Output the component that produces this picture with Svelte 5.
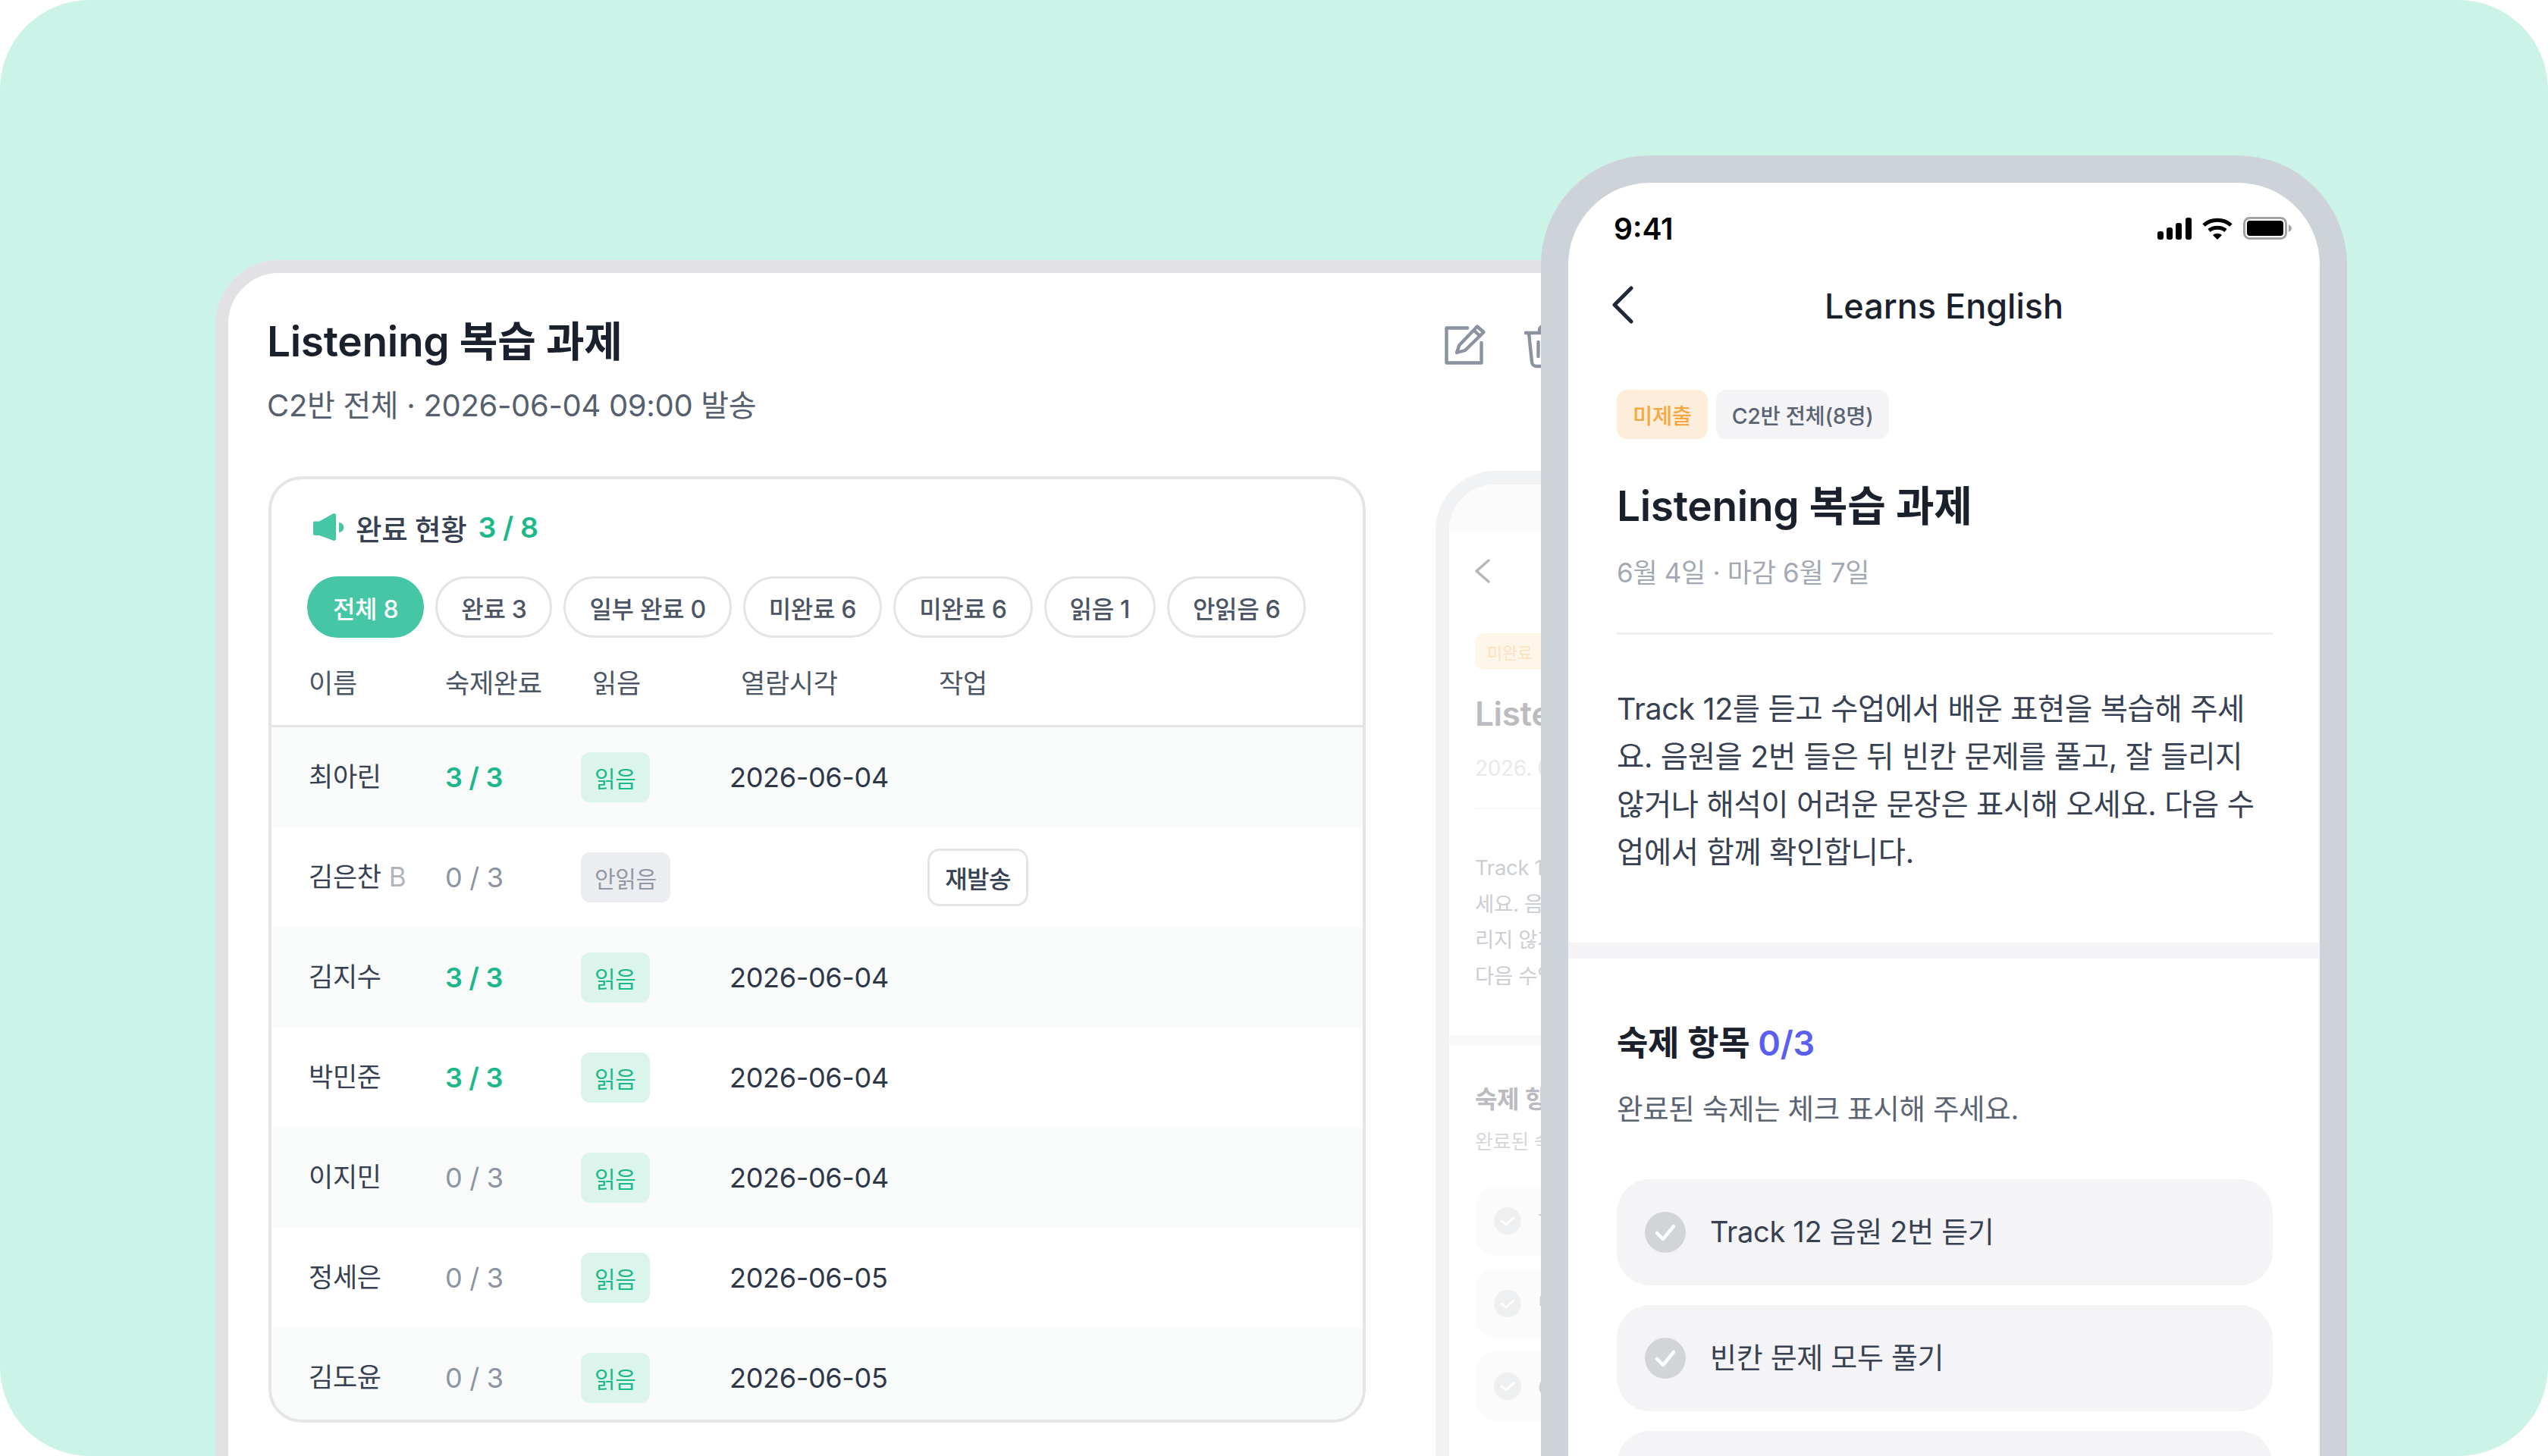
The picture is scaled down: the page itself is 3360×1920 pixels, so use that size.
<script lang="ts">
	const filters = [
		{ label: '전체 8', active: true },
		{ label: '완료 3' },
		{ label: '일부 완료 0' },
		{ label: '미완료 6' },
		{ label: '미완료 6' },
		{ label: '읽음 1' },
		{ label: '안읽음 6' }
	];

	const students = [
		{ name: '최아린', score: '3 / 3', done: true, read: true, date: '2026-06-04' },
		{ name: '김은찬', suffix: 'B', score: '0 / 3', read: false, date: '' },
		{ name: '김지수', score: '3 / 3', done: true, read: true, date: '2026-06-04' },
		{ name: '박민준', score: '3 / 3', done: true, read: true, date: '2026-06-04' },
		{ name: '이지민', score: '0 / 3', read: true, date: '2026-06-04' },
		{ name: '정세은', score: '0 / 3', read: true, date: '2026-06-05' },
		{ name: '김도윤', score: '0 / 3', read: true, date: '2026-06-05' }
	];

	const tasks = ['Track 12 음원 2번 듣기', '빈칸 문제 모두 풀기', 'Quiz 3 풀기'];
</script>

<main class="stage">
	<section class="tablet">
		<header class="tablet-head">
			<div>
				<h1>Listening 복습 과제</h1>
				<p>C2반 전체 · 2026-06-04 09:00 발송</p>
			</div>
			<div class="head-icons">
				<svg width="56" height="56" viewBox="0 0 56 56" fill="none" stroke="#8a939f" stroke-width="4.4" stroke-linecap="round" stroke-linejoin="round">
					<path d="M30 5.500H2.500v46h46V25" />
					<path d="M16 38l3.500-10L43 3.500l8.500 7.500L27 35z" />
					<path d="M38.500 8.500l8 7.500" />
				</svg>
				<svg width="60" height="60" viewBox="0 0 60 60" fill="none" stroke="#8a939f" stroke-width="4.4" stroke-linecap="round" stroke-linejoin="round">
					<path d="M2 12h56M20 12V8a5 5 0 0 1 5-5h10a5 5 0 0 1 5 5v4" />
					<path d="M6 12l4 38a6 6 0 0 0 6 6h28a6 6 0 0 0 6-6l4-38" />
					<path d="M18.500 24v19M30 24v19M41.500 24v19" />
				</svg>
			</div>
		</header>

		<section class="card">
			<div class="card-title">
				<svg width="41" height="38" viewBox="0 0 41 38">
					<path fill="#45c6a4" d="M2 11.500h6L26 1.500a2.500 2.500 0 0 1 4 2v31a2.500 2.500 0 0 1-4 2L8 30h-6a2 2 0 0 1-2-2V13.500a2 2 0 0 1 2-2z" />
					<path fill="#45c6a4" d="M34 13a6.500 6.500 0 0 1 0 13z" />
				</svg>
				<span>완료 현황</span>
				<b>3 / 8</b>
			</div>

			<div class="chips">
				{#each filters as f}
					<span class="chip" class:active={f.active}>{f.label}</span>
				{/each}
			</div>

			<div class="row head">
				<span>이름</span>
				<span>숙제완료</span>
				<span class="shift">읽음</span>
				<span class="shift">열람시각</span>
				<span class="shift">작업</span>
			</div>

			{#each students as s, i}
				<div class="row" class:odd={i % 2 === 0}>
					<span class="name">{s.name}{#if s.suffix}<em>{s.suffix}</em>{/if}</span>
					<span class="score" class:done={s.done}>{s.score}</span>
					<span><i class="badge" class:unread={!s.read}>{s.read ? '읽음' : '안읽음'}</i></span>
					<span class="date">{s.date}</span>
					<span>{#if !s.read}<button class="resend">재발송</button>{/if}</span>
				</div>
			{/each}
		</section>

		<aside class="ghost">
			<div class="ghost-status"></div>
			<div class="ghost-body">
				<svg width="20" height="32" viewBox="0 0 20 32" fill="none" stroke="#b5b7bb" stroke-width="3.5" stroke-linecap="round" stroke-linejoin="round">
					<path d="M18 2L2 16l16 14" />
				</svg>
				<span class="ghost-tag">미완료</span>
				<h2>Listening 복습 과제</h2>
				<p class="ghost-date">2026. 06. 04</p>
				<div class="ghost-line"></div>
				<p class="ghost-text">Track 12를 듣고 수업에서 배운<br />세요. 음원을 2번 들은 뒤<br />리지 않거나 해석이 어려운<br />다음 수업에서 함께</p>
			</div>
			<div class="ghost-band"></div>
			<div class="ghost-body lower">
				<h3>숙제 항목</h3>
				<p class="ghost-sub">완료된 숙제는 체크 표시해</p>
				<div class="ghost-items">
					{#each tasks as t}
						<div class="ghost-item">
							<svg width="36" height="36" viewBox="0 0 36 36">
								<circle cx="18" cy="18" r="18" fill="#eeeff1" />
								<path d="M10 18l6 5 10-9" fill="none" stroke="#fff" stroke-width="3" stroke-linecap="round" stroke-linejoin="round" />
							</svg>
							<span>{t}</span>
						</div>
					{/each}
				</div>
			</div>
		</aside>
	</section>

	<section class="phone">
		<div class="status">
			<span class="time">9:41</span>
			<div class="status-icons">
				<svg width="45" height="29" viewBox="0 0 45 29" fill="#000">
					<rect x="0" y="18" width="8" height="11" rx="3" />
					<rect x="12" y="13" width="8" height="16" rx="3" />
					<rect x="24" y="7" width="8" height="22" rx="3" />
					<rect x="37" y="0" width="8" height="29" rx="3" />
				</svg>
				<svg width="40" height="29" viewBox="0 0 40 29">
					<path fill="none" stroke="#000" stroke-width="5" d="M2 10c10-9 26-9 36 0M9 17c6-5 16-5 22 0" />
					<path fill="#000" d="M14 23c4-3 8-3 12 0l-6 6z" />
				</svg>
				<svg width="64" height="30" viewBox="0 0 64 30">
					<rect x="1.500" y="1.500" width="55" height="27" rx="7" fill="none" stroke="#a3a3a3" stroke-width="3" />
					<rect x="5" y="5" width="48" height="20" rx="4" fill="#000" />
					<path fill="#a3a3a3" d="M60 10c2 1 4 3 4 5s-2 4-4 5z" />
				</svg>
			</div>
		</div>

		<div class="nav">
			<svg width="28" height="50" viewBox="0 0 28 50" fill="none" stroke="#1f2937" stroke-width="5" stroke-linecap="round" stroke-linejoin="round">
				<path d="M25 3L3 25l22 22" />
			</svg>
			<span>Learns English</span>
		</div>

		<div class="phone-top">
			<div class="tags">
				<span class="tag warn">미제출</span>
				<span class="tag">C2반 전체(8명)</span>
			</div>
			<h2>Listening 복습 과제</h2>
			<p class="due">6월 4일 · 마감 6월 7일</p>
			<div class="rule"></div>
			<p class="body">Track 12를 듣고 수업에서 배운 표현을 복습해 주세<br />요. 음원을 2번 들은 뒤 빈칸 문제를 풀고, 잘 들리지<br />않거나 해석이 어려운 문장은 표시해 오세요. 다음 수<br />업에서 함께 확인합니다.</p>
		</div>

		<div class="band"></div>

		<div class="phone-tasks">
			<h3>숙제 항목 <b>0/3</b></h3>
			<p class="hint">완료된 숙제는 체크 표시해 주세요.</p>
			<div class="task-list">
				{#each tasks as t}
					<div class="task">
						<svg width="54" height="54" viewBox="0 0 54 54">
							<circle cx="27" cy="27" r="27" fill="#d1d5d8" />
							<path d="M16 28l8 8 14-17" fill="none" stroke="#fff" stroke-width="4.500" stroke-linecap="round" stroke-linejoin="round" />
						</svg>
						<span>{t}</span>
					</div>
				{/each}
			</div>
		</div>
	</section>
</main>

<style>
	:global(body) {
		margin: 0;
		background: #fff;
	}

	* {
		box-sizing: border-box;
	}

	.stage {
		position: relative;
		width: 3360px;
		height: 1920px;
		overflow: hidden;
		background: #ccf3e7;
		border-radius: 118px;
		font-family: Inter, 'Noto Sans CJK KR', sans-serif;
		letter-spacing: -0.02em;
		color: #374151;
	}

	h1, h2, h3, p {
		margin: 0;
	}

	/* tablet window */
	.tablet {
		position: absolute;
		left: 284px;
		top: 343px;
		width: 2300px;
		height: 1700px;
		padding: 0 51px;
		background: #fff;
		border: 17px solid #e2e2e4;
		border-radius: 84px;
	}

	.tablet-head {
		display: flex;
		justify-content: space-between;
		width: 1718px;
		padding-top: 52px;
		height: 268px;
	}

	h1 {
		font-size: 55px;
		font-weight: 600;
		line-height: 76px;
		color: #1a202c;
	}

	.tablet-head p {
		margin-top: 20px;
		font-size: 40px;
		line-height: 54px;
		color: #565f6e;
	}

	.head-icons {
		display: flex;
		gap: 49px;
		margin-top: 15px;
	}

	.card {
		width: 1447px;
		height: 1248px;
		margin-left: 2px;
		overflow: hidden;
		border: 4px solid #e4e5e7;
		border-radius: 44px;
	}

	.card-title {
		display: flex;
		align-items: center;
		gap: 15px;
		height: 128px;
		padding: 0 0 2px 55px;
		font-size: 37.5px;
		font-weight: 500;
	}

	.card-title b {
		font-weight: 600;
		color: #1db88a;
	}

	.chips {
		display: flex;
		gap: 15px;
		padding-left: 47px;
	}

	.chip {
		display: flex;
		align-items: center;
		flex-shrink: 0;
		height: 81px;
		padding: 0 31px;
		border: 3px solid #e3e4e6;
		border-radius: 41px;
		font-size: 32px;
		font-weight: 500;
		white-space: nowrap;
		color: #4b5563;
	}

	.chip.active {
		background: #45c6a4;
		border-color: #45c6a4;
		color: #fff;
	}

	.row {
		display: grid;
		grid-template-columns: 180px 179px 196px 261px 1fr;
		align-items: center;
		height: 132px;
		padding-left: 49px;
		font-size: 36px;
	}

	.row.head {
		height: 118px;
		font-size: 35px;
		color: #4b5563;
		border-bottom: 3px solid #e4e5e7;
	}

	.shift {
		padding-left: 15px;
	}

	.row.odd {
		background: #f9fafa;
	}

	.name {
		font-size: 35px;
		line-height: 44px;
		padding-bottom: 2px;
	}

	.name em {
		margin-left: 10px;
		font-style: normal;
		color: #b0b4bc;
	}

	.score {
		font-size: 36px;
		color: #8d94a1;
	}

	.score.done {
		font-weight: 600;
		color: #1db88a;
	}

	.badge {
		display: inline-flex;
		align-items: center;
		height: 66px;
		padding: 0 18px;
		border-radius: 12px;
		background: #dbf4ec;
		color: #1db88a;
		font-style: normal;
		font-size: 30px;
	}

	.badge.unread {
		background: #ecedf0;
		color: #9198a5;
	}

	.date {
		color: #2d3748;
	}

	.resend {
		display: block;
		width: 133px;
		height: 76px;
		padding: 0;
		background: #fff;
		border: 3px solid #e3e4e6;
		border-radius: 16px;
		font: 500 32px Inter, 'Noto Sans CJK KR', sans-serif;
		letter-spacing: -0.02em;
		color: #374151;
	}

	/* faded second phone behind the front one */
	.ghost {
		position: absolute;
		left: 1592px;
		top: 261px;
		width: 560px;
		height: 1400px;
		background: #fff;
		border: 18px solid #f1f2f4;
		border-radius: 78px;
		overflow: hidden;
		color: #cbced3;
	}

	.ghost-status {
		height: 62px;
		background: #fbfbfc;
	}

	.ghost-body {
		padding: 36px 0 0 34px;
	}

	.ghost-body svg {
		display: block;
	}

	.ghost-tag {
		display: inline-flex;
		align-items: center;
		margin-top: 66px;
		width: 140px;
		height: 48px;
		padding-left: 16px;
		background: #fff6ea;
		border-radius: 12px;
		font-size: 22px;
		color: #fce1be;
	}

	.ghost h2 {
		margin-top: 28px;
		font-size: 44px;
		line-height: 60px;
		font-weight: 600;
		white-space: nowrap;
		color: #bbbcc0;
	}

	.ghost-date {
		margin-top: 24px;
		font-size: 28px;
		line-height: 36px;
		color: #e8e9eb;
	}

	.ghost-line {
		height: 2px;
		margin-top: 34px;
		background: #f7f7f8;
	}

	.ghost-text {
		margin-top: 54px;
		font-size: 27.5px;
		line-height: 47.5px;
		white-space: nowrap;
	}

	.ghost-band {
		height: 13px;
		margin-top: 54px;
		background: #f9f9fa;
	}

	.ghost-body.lower {
		padding-top: 50px;
	}

	.ghost h3 {
		font-size: 32px;
		line-height: 44px;
		font-weight: 600;
		color: #b9bbc0;
	}

	.ghost-sub {
		margin-top: 16px;
		font-size: 26px;
		line-height: 36px;
		color: #d5d7db;
	}

	.ghost-items {
		display: flex;
		flex-direction: column;
		gap: 17px;
		margin-top: 40px;
	}

	.ghost-item {
		display: flex;
		align-items: center;
		gap: 22px;
		height: 92px;
		padding-left: 25px;
		background: #fbfbfb;
		border-radius: 28px;
		font-size: 28px;
		color: #cbced3;
	}

	/* front phone */
	.phone {
		position: absolute;
		left: 2032px;
		top: 205px;
		width: 1063px;
		height: 1900px;
		background: #fff;
		border: 36px solid #ced3da;
		border-radius: 144px;
	}

	.status {
		display: flex;
		justify-content: space-between;
		align-items: center;
		height: 92px;
		padding: 28px 37px 0 60px;
	}

	.time {
		font-size: 39px;
		font-weight: 600;
		letter-spacing: 0;
		color: #000;
	}

	.status-icons {
		display: flex;
		align-items: center;
		gap: 14px;
	}

	.nav {
		position: relative;
		display: flex;
		justify-content: center;
		align-items: center;
		height: 100px;
		margin-top: 20px;
		font-size: 45px;
		font-weight: 500;
		letter-spacing: 0;
		color: #1a202c;
	}

	.nav svg {
		position: absolute;
		left: 58px;
		top: 24px;
	}

	.phone-top {
		padding: 61px 62px 0 64px;
	}

	.tags {
		display: flex;
		gap: 11px;
	}

	.tag {
		display: flex;
		align-items: center;
		height: 65px;
		padding: 0 21px;
		background: #f4f4f6;
		border-radius: 14px;
		font-size: 28.5px;
		font-weight: 500;
		color: #5b6472;
	}

	.tag.warn {
		background: #fdeedb;
		color: #f5a742;
	}

	.phone-top h2 {
		margin-top: 50px;
		font-size: 55px;
		line-height: 76px;
		font-weight: 600;
		color: #1a202c;
	}

	.due {
		margin-top: 25px;
		font-size: 35px;
		line-height: 50px;
		color: #a3a9b3;
	}

	.rule {
		height: 3px;
		margin-top: 54px;
		background: #eeeff2;
	}

	.body {
		margin-top: 67px;
		font-size: 39.4px;
		line-height: 63px;
		white-space: nowrap;
		color: #374151;
	}

	.band {
		height: 21px;
		margin-top: 87px;
		background: #f4f4f6;
	}

	.phone-tasks {
		padding: 80px 62px 0 64px;
	}

	.phone-tasks h3 {
		font-size: 45px;
		line-height: 64px;
		font-weight: 600;
		color: #1a202c;
	}

	.phone-tasks h3 b {
		font-weight: 600;
		color: #5b5fef;
	}

	.hint {
		margin-top: 30px;
		font-size: 37.5px;
		line-height: 50px;
		color: #5b6472;
	}

	.task-list {
		display: flex;
		flex-direction: column;
		gap: 26px;
		margin-top: 67px;
	}

	.task {
		display: flex;
		align-items: center;
		gap: 32px;
		height: 140px;
		padding-left: 37px;
		background: #f4f4f6;
		border-radius: 44px;
		font-size: 38px;
	}

	.task span {
		padding-bottom: 8px;
	}
</style>
